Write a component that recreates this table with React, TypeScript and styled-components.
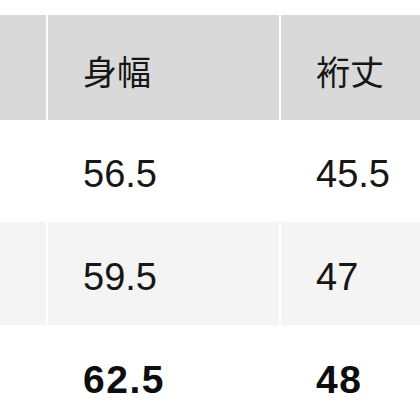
import React from "react";
import styled, { createGlobalStyle } from "styled-components";

const GlobalStyle = createGlobalStyle`
  html, body {
    margin: 0;
    padding: 0;
    background: #ffffff;
  }
  body {
    width: 420px;
    height: 420px;
    overflow: hidden;
    font-family: "Liberation Sans", "Noto Sans CJK JP", sans-serif;
    color: #161616;
  }
`;

const Wrapper = styled.div`
  padding-top: 15px;
`;

const Table = styled.div`
  display: grid;
  grid-template-columns: 46px 231px 1fr;
  grid-auto-rows: auto;
  column-gap: 2px;
  background: #ffffff;
`;

type Tone = "head" | "plain" | "shade";

const tones: Record<Tone, string> = {
  head: "#d9d9d9",
  plain: "#ffffff",
  shade: "#f4f4f4",
};

const Cell = styled.div<{ $tone: Tone; $height: number; $bold?: boolean }>`
  height: ${(p) => p.$height}px;
  background: ${(p) => tones[p.$tone]};
  display: flex;
  align-items: center;
  padding: 6px 0 0 35px;
  box-sizing: border-box;
  font-size: ${(p) => (p.$tone === "head" ? 34 : p.$bold ? 39 : 38)}px;
  font-weight: ${(p) => (p.$bold ? 700 : 400)};
  letter-spacing: ${(p) => (p.$bold ? "1.5px" : "0")};
  font-family: ${(p) =>
    p.$tone === "head"
      ? `"Noto Sans CJK JP", sans-serif`
      : `"Liberation Sans", "Noto Sans CJK JP", sans-serif`};
  color: ${(p) => (p.$bold ? "#0d0d0d" : "#161616")};
  line-height: 1;
  white-space: nowrap;
`;

const rows: { tone: Tone; height: number; bold?: boolean; cells: string[] }[] = [
  { tone: "head", height: 105, cells: ["", "身幅", "裄丈"] },
  { tone: "plain", height: 102, cells: ["", "56.5", "45.5"] },
  { tone: "shade", height: 103, cells: ["", "59.5", "47"] },
  { tone: "plain", height: 102, bold: true, cells: ["", "62.5", "48"] },
];

export default function App() {
  return (
    <>
      <GlobalStyle />
      <Wrapper>
        <Table>
          {rows.map((row, i) =>
            row.cells.map((text, j) => (
              <Cell key={`${i}-${j}`} $tone={row.tone} $height={row.height} $bold={row.bold}>
                {text}
              </Cell>
            ))
          )}
        </Table>
      </Wrapper>
    </>
  );
}
